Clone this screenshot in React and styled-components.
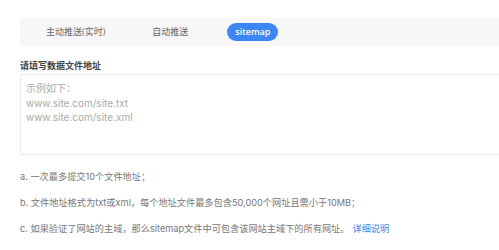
import React from "react";
import styled, { createGlobalStyle } from "styled-components";

const FONT = `Inter, "Noto Sans CJK SC", sans-serif`;
const TAB_FONT = `"Open Sans", "Noto Sans CJK SC", sans-serif`;

const Global = createGlobalStyle`
  html, body { margin: 0; padding: 0; background: #fff; overflow: hidden; }
  body { font-family: ${FONT}; }
`;

const Page = styled.div`
  width: 499px;
  height: 250px;
  overflow: hidden;
  padding: 18px 0 0 20px;
  box-sizing: border-box;
`;

const TabBar = styled.div`
  display: flex;
  align-items: center;
  gap: 31px;
  height: 28px;
  width: 600px;
  padding-left: 18px;
  background: #f7f7f7;
  box-sizing: border-box;
`;

const Tab = styled.div`
  height: 18px;
  line-height: 18px;
  padding: 0 8px;
  border-radius: 9px;
  font-family: ${TAB_FONT};
  font-size: 9px;
  font-weight: ${(p) => (p.$active ? 600 : 400)};
  color: ${(p) => (p.$active ? "#fff" : "#666")};
  background: ${(p) => (p.$active ? "#3d86f6" : "transparent")};
  white-space: nowrap;
`;

const Heading = styled.div`
  margin-top: 14px;
  font-size: 9px;
  font-weight: bold;
  color: #444;
  line-height: 12px;
`;

const Area = styled.textarea`
  display: block;
  margin-top: 2px;
  width: 620px;
  height: 81px;
  box-sizing: border-box;
  border: 1px solid #ececec;
  padding: 6px 5px;
  resize: none;
  font-family: ${FONT};
  font-size: 10px;
  line-height: 14.5px;
  color: #999;
  outline: none;
  &::placeholder { color: #aaa; }
`;

const List = styled.div`
  margin-top: 16px;
  display: flex;
  flex-direction: column;
  gap: 13.5px;
`;

const Item = styled.div`
  font-size: 9.2px;
  line-height: 12.5px;
  color: #777;
  white-space: nowrap;
`;

const Link = styled.a`
  color: #3d86f6;
  text-decoration: none;
  margin-left: 3px;
`;

export default function App() {
  return (
    <Page>
      <Global />
      <TabBar>
        <Tab>主动推送(实时)</Tab>
        <Tab>自动推送</Tab>
        <Tab $active>sitemap</Tab>
      </TabBar>
      <Heading>请填写数据文件地址</Heading>
      <Area placeholder={"示例如下：\nwww.site.com/site.txt\nwww.site.com/site.xml"} />
      <List>
        <Item>a. 一次最多提交10个文件地址；</Item>
        <Item>b. 文件地址格式为txt或xml，每个地址文件最多包含50,000个网址且需小于10MB；</Item>
        <Item>
          c. 如果验证了网站的主域，那么sitemap文件中可包含该网站主域下的所有网址。
          <Link href="#">详细说明</Link>
        </Item>
      </List>
    </Page>
  );
}
